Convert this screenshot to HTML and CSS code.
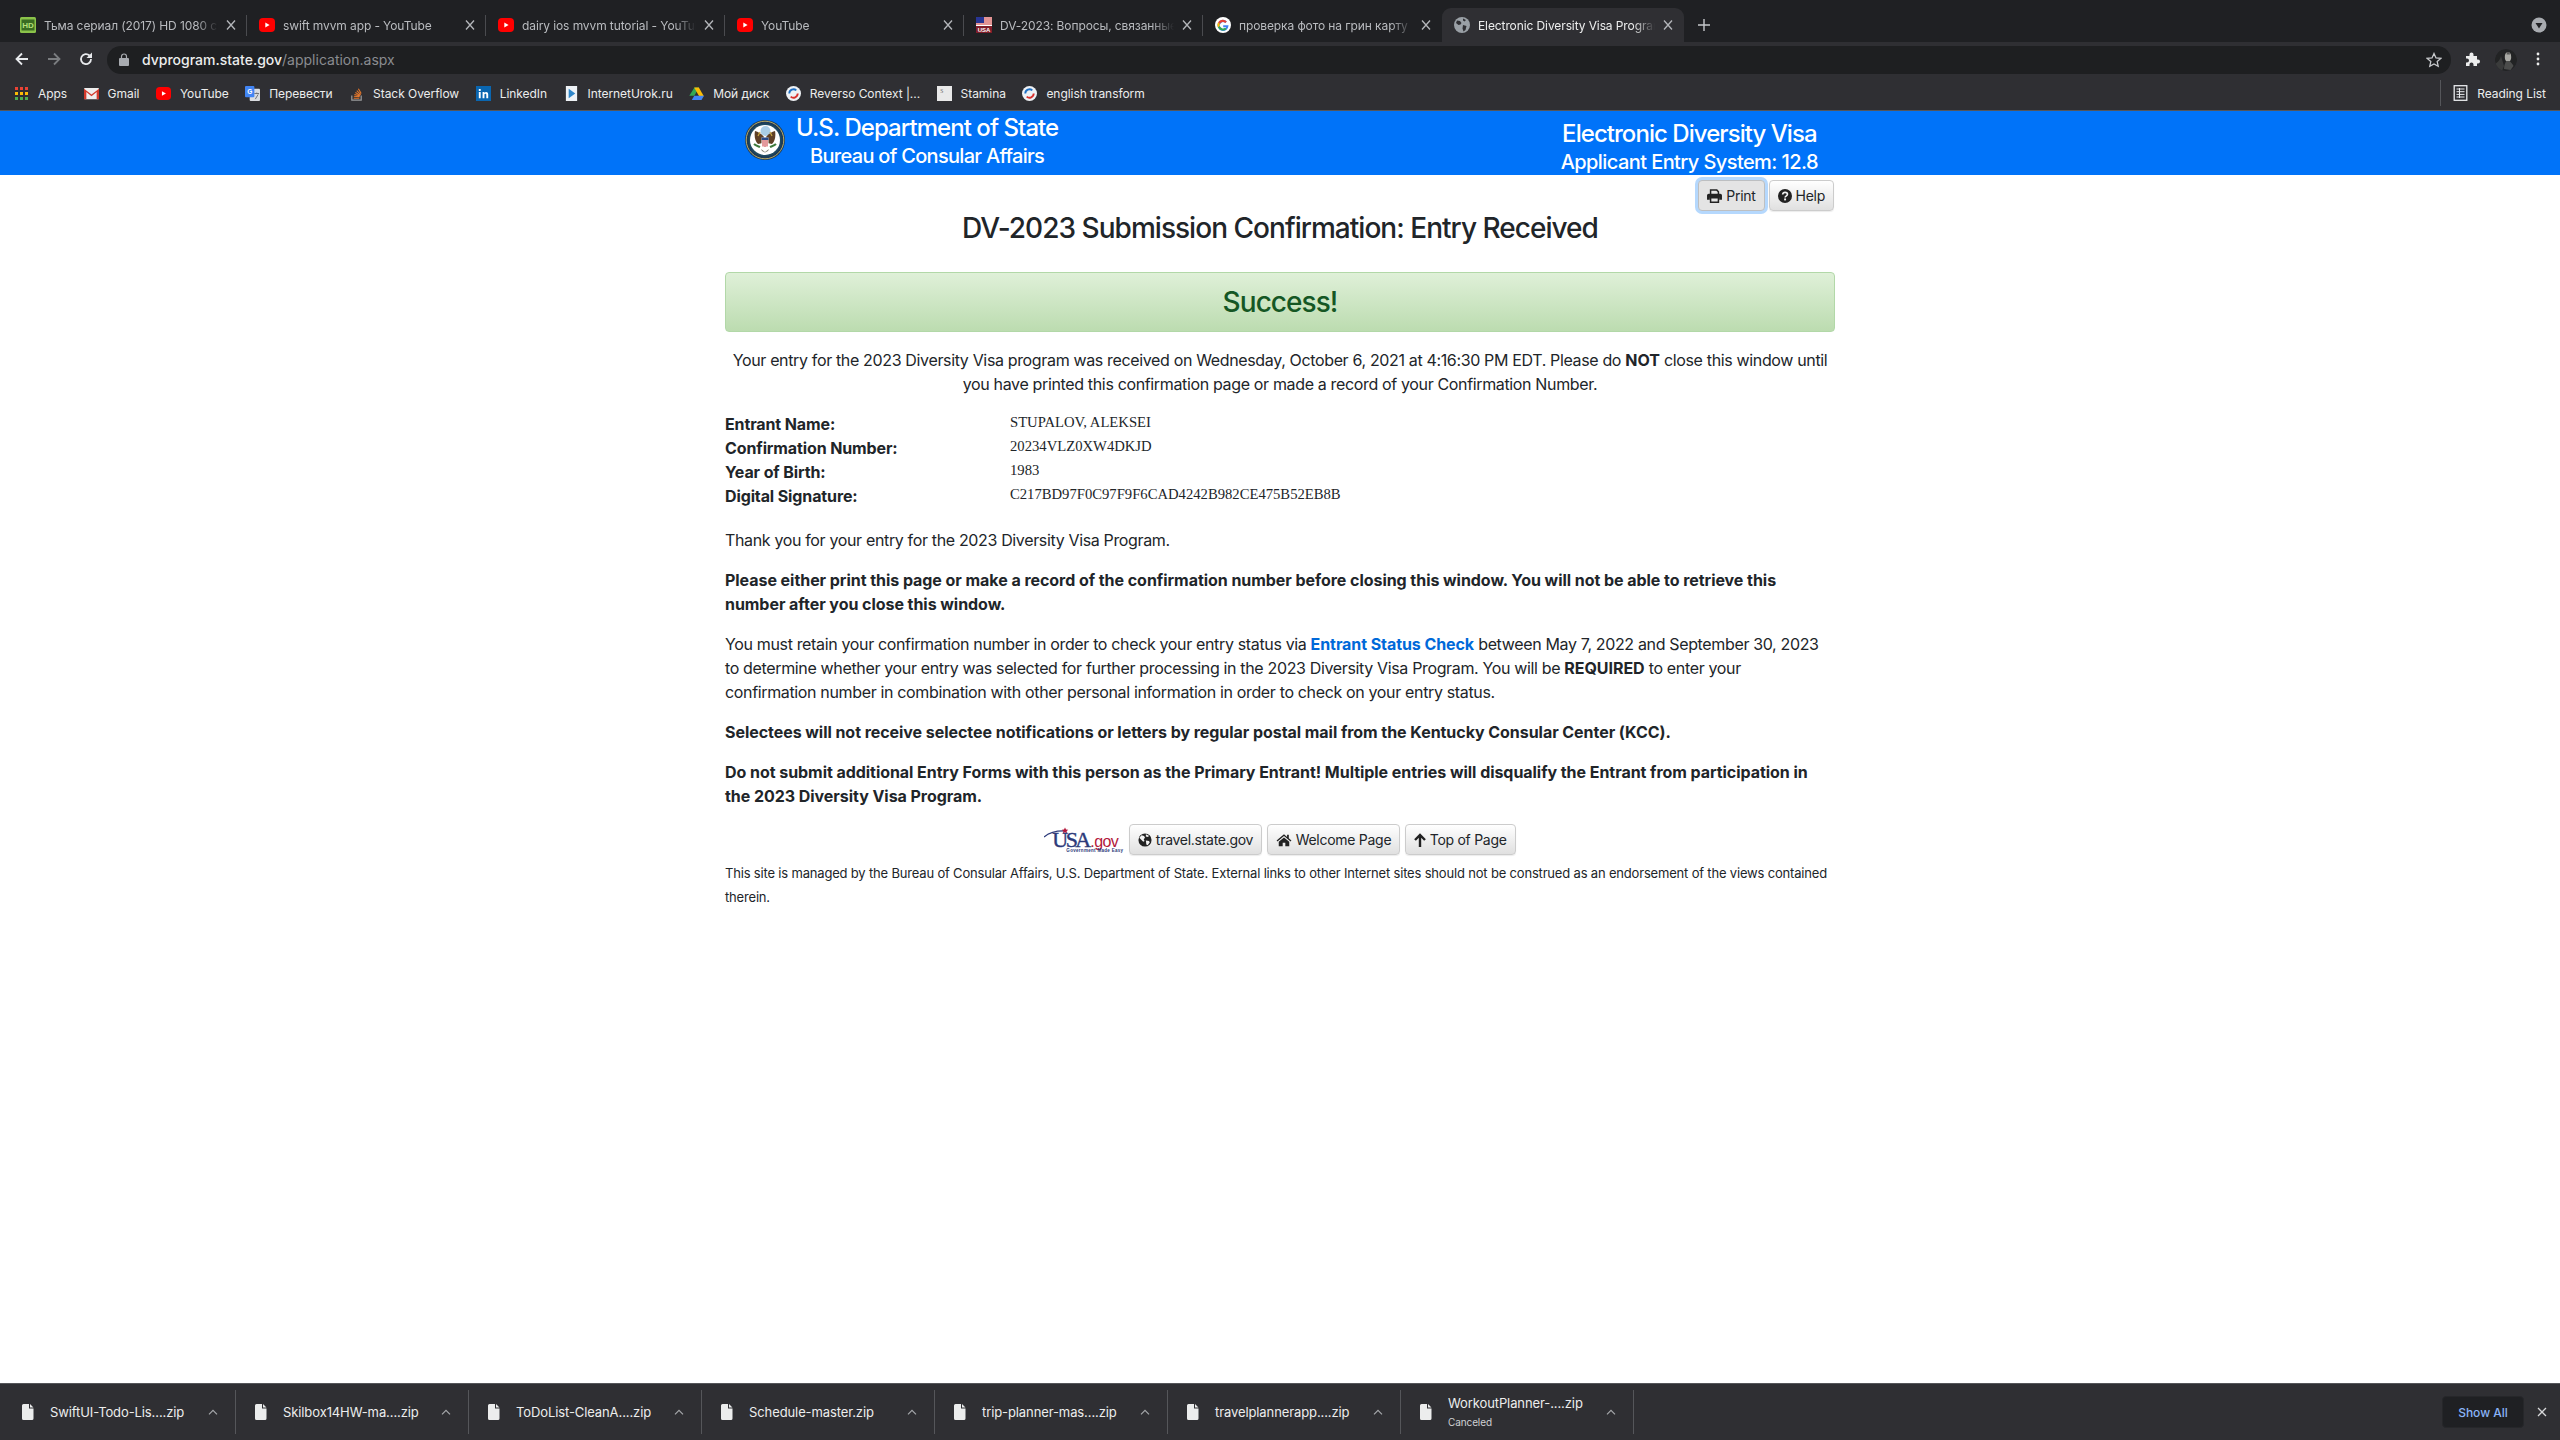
FILE: index.html
```html
<!DOCTYPE html>
<html lang="en">
<head>
<meta charset="utf-8">
<title>Electronic Diversity Visa Program</title>
<link rel="stylesheet" href="styles.css">
</head>
<body>
<svg class="defs" width="0" height="0">
  <symbol id="yt" viewBox="0 0 16 16"><rect x="0" y="1" width="16" height="14" rx="4" fill="#f00"/><path d="M6.300 5.500v5L10.600 8z" fill="#fff"/></symbol>
  <symbol id="x" viewBox="0 0 10 10"><path d="M1 .5l8 9M9 .5l-8 9" stroke="#b4b6ba" stroke-width="1.300" fill="none"/></symbol>
  <symbol id="rev" viewBox="0 0 16 16"><circle cx="8" cy="8" r="8" fill="#eef1f5"/><path d="M3.500 8a4.500 4.500 0 0 1 7.500-3.300" stroke="#1d6fc4" stroke-width="2" fill="none"/><path d="M12.500 8A4.500 4.500 0 0 1 5 11.300" stroke="#d8302c" stroke-width="2" fill="none"/></symbol>
  <symbol id="file" viewBox="0 0 12 16"><path d="M1.500 0H7v4.500h4.500V14.500a1.500 1.500 0 0 1-1.500 1.500H1.500A1.500 1.500 0 0 1 0 14.500V1.500A1.500 1.500 0 0 1 1.500 0zM8 0l3.500 3.500H8z" fill="#eceded"/></symbol>
  <symbol id="caret" viewBox="0 0 10 6"><path d="M1 5.300L5 1.300l4 4" stroke="#a5a7aa" stroke-width="1.200" fill="none"/></symbol>
</svg>

<div class="browser">
  <div class="tabstrip">
    <div class="tab"><svg class="fav" viewBox="0 0 16 16"><rect width="16" height="16" rx="1.500" fill="#8bc34a"/><rect x="1.500" y="2.500" width="13" height="11" fill="#3a6b22"/><text x="8" y="11" class="hd">HD</text></svg><span class="tab-title">Тьма сериал (2017) HD 1080 смотреть онлайн</span><svg class="tab-x"><use href="#x"/></svg></div>
    <div class="tab"><svg class="fav"><use href="#yt"/></svg><span class="tab-title">swift mvvm app - YouTube</span><svg class="tab-x"><use href="#x"/></svg></div>
    <div class="tab"><svg class="fav"><use href="#yt"/></svg><span class="tab-title">dairy ios mvvm tutorial - YouTube</span><svg class="tab-x"><use href="#x"/></svg></div>
    <div class="tab"><svg class="fav"><use href="#yt"/></svg><span class="tab-title">YouTube</span><svg class="tab-x"><use href="#x"/></svg></div>
    <div class="tab"><svg class="fav" viewBox="0 0 16 16"><rect width="16" height="16" fill="#fff"/><path d="M0 1h16M0 3h16M0 5h16M0 7h16" stroke="#c62828" stroke-width="1"/><rect width="8" height="6" fill="#283593"/><rect y="9" width="16" height="7" fill="#7f1d2a"/><text x="8" y="15.200" class="usa">USA</text></svg><span class="tab-title">DV-2023: Вопросы, связанные с</span><svg class="tab-x"><use href="#x"/></svg></div>
    <div class="tab tab-noedge"><svg class="fav" viewBox="0 0 16 16"><circle cx="8" cy="8" r="8" fill="#fff"/><path d="M13.500 8.200H8.200v2h3a3.400 3.400 0 1 1-.9-4.300l1.500-1.500A5.500 5.500 0 1 0 13.500 8.200z" fill="#4285f4"/><path d="M3.100 5.300a5.500 5.500 0 0 1 8.700-.9l-1.500 1.500a3.400 3.400 0 0 0-5.500 1z" fill="#ea4335"/><path d="M3 10.500a5.500 5.500 0 0 1 0-5.200l1.800 1.600a3.400 3.400 0 0 0 0 2.200z" fill="#fbbc05"/><path d="M3 10.500l1.800-1.400a3.400 3.400 0 0 0 5.200 1.700l1.700 1.300A5.500 5.500 0 0 1 3 10.500z" fill="#34a853"/></svg><span class="tab-title">проверка фото на грин карту</span><svg class="tab-x"><use href="#x"/></svg></div>
    <div class="tab tab-active"><svg class="fav" viewBox="0 0 16 16"><circle cx="8" cy="8" r="8" fill="#9aa0a6"/><path d="M3 3.500l3 .5 1.500 2-1 1.500-2 .5-2.500-2zM9 8l3.500 1-1 4-2 1.500-1-3zM9 1.500l3 1.500-1.500 1.500L9 3.500z" fill="#2f2f33"/></svg><span class="tab-title">Electronic Diversity Visa Program</span><svg class="tab-x"><use href="#x"/></svg></div>
    <svg class="newtab" viewBox="0 0 12 12"><path d="M6 0v12M0 6h12" stroke="#c6c8cc" stroke-width="1.400"/></svg>
    <svg class="profile" viewBox="0 0 16 16"><circle cx="8" cy="8" r="7.500" fill="#a8abb0"/><path d="M4.500 6h7L8 11.500z" fill="#202124"/></svg>
  </div>

  <div class="toolbar">
    <svg class="nav" viewBox="0 0 16 16"><path d="M14 8H3M8 2.500L2.500 8 8 13.500" stroke="#e8eaed" stroke-width="1.800" fill="none"/></svg>
    <svg class="nav" viewBox="0 0 16 16"><path d="M2 8h11M8 2.500L13.500 8 8 13.500" stroke="#7b7d80" stroke-width="1.800" fill="none"/></svg>
    <svg class="nav" viewBox="0 0 16 16"><path d="M13 8a5 5 0 1 1-1.500-3.500" stroke="#e8eaed" stroke-width="1.800" fill="none"/><path d="M14 1.500V7H8.500z" fill="#e8eaed"/></svg>
    <div class="omnibox">
      <svg class="lock" viewBox="0 0 10 13"><path d="M2.500 5V3.500a2.500 2.500 0 0 1 5 0V5" stroke="#a8abb0" stroke-width="1.200" fill="none"/><rect y="5" width="10" height="8" rx="1" fill="#a8abb0"/></svg>
      <span class="url-host">dvprogram.state.gov</span><span class="url-path">/application.aspx</span>
      <svg class="star" viewBox="0 0 16 16"><path d="M8 1.500l2 4.400 4.800.5-3.600 3.200 1 4.700L8 11.900l-4.200 2.400 1-4.700L1.200 6.400 6 5.900z" stroke="#c8cacd" stroke-width="1.300" fill="none"/></svg>
    </div>
    <svg class="ext" viewBox="0 0 16 16"><path d="M1 5h3.500V3.500a2 2 0 0 1 4 0V5H12v3.500h1a2 2 0 0 1 0 4h-1V15H8.500v-1.500a2 2 0 0 0-4 0V15H1v-3.500h1a2 2 0 0 0 0-4H1z" fill="#eceded"/></svg>
    <svg class="avatar" viewBox="0 0 22 22"><circle cx="11" cy="11" r="11" fill="#222324"/><path d="M0 15c3-2 5-4 6-8l3 10-2 5H4z" fill="#3a3b3b"/><ellipse cx="13" cy="8" rx="3.200" ry="4.800" fill="#a9a9a4"/><path d="M9 20c0-4 1.500-7 2.500-8h3c1.500 1 3 3 4 5l-3 4z" fill="#4b4c4b"/><path d="M11.500 5.500h3.500l-.5-2.500h-2.500z" fill="#5a5a58"/></svg>
    <svg class="menu" viewBox="0 0 4 16"><circle cx="2" cy="3" r="1.400" fill="#eceded"/><circle cx="2" cy="8" r="1.400" fill="#eceded"/><circle cx="2" cy="13" r="1.400" fill="#eceded"/></svg>
  </div>

  <div class="bookmarks">
    <a class="bm"><svg class="bm-i" viewBox="0 0 15 15"><path d="M1 2.500h3M6 2.500h3M11 2.500h3" stroke="#ea4335" stroke-width="3"/><path d="M1 7.500h3M6 7.500h3M11 7.500h3" stroke="#fbbc05" stroke-width="3"/><path d="M1 12.500h3M6 12.500h3M11 12.500h3" stroke="#4caf50" stroke-width="3"/></svg>Apps</a>
    <a class="bm"><svg class="bm-i" viewBox="0 0 16 16"><rect y="2" width="16" height="12" rx="1" fill="#eee"/><path d="M0 3l8 6 8-6v11h-2.500V6.500L8 11 2.500 6.500V14H0z" fill="#d33a2c"/></svg>Gmail</a>
    <a class="bm"><svg class="bm-i"><use href="#yt"/></svg>YouTube</a>
    <a class="bm"><svg class="bm-i" viewBox="0 0 16 16"><rect x="5" y="3" width="11" height="13" rx="1" fill="#d9dce0"/><rect width="10" height="12" rx="1" fill="#4285f4"/><text x="5" y="9" class="g">G</text><path d="M10 8h5M12.500 7v1.500M11 14l3-5" stroke="#6b6f75" stroke-width="1"/></svg>Перевести</a>
    <a class="bm"><svg class="bm-i" viewBox="0 0 16 16"><path d="M3 10v5h10v-5" stroke="#9b9c9d" stroke-width="1.300" fill="none"/><path d="M5 13h6M5.200 11l6 .5M5.800 9l5.800 1.500M6.800 7l5.200 3M8.300 5l4.200 4.200M10 3l3 5" stroke="#e4772c" stroke-width="1.200"/></svg>Stack Overflow</a>
    <a class="bm"><svg class="bm-i" viewBox="0 0 16 16"><rect width="16" height="16" fill="#0a66b0"/><path d="M3 6.500h2V13H3zM3 3.300h2v2H3zM7 6.500h2v1c1-1.500 4-1.500 4 1.500v4h-2V9.500c0-1.500-2-1.500-2 0V13H7z" fill="#fff"/></svg>LinkedIn</a>
    <a class="bm"><svg class="bm-i" viewBox="0 0 16 16"><path d="M2 0h12v16H2z" fill="#eef2f6"/><path d="M5 3l7 5-7 5z" fill="#2e86c9"/></svg>InternetUrok.ru</a>
    <a class="bm"><svg class="bm-i" viewBox="0 0 16 16"><path d="M5.500 1.500h5L5.300 10.500H0z" fill="#34a853" transform="translate(.3)"/><path d="M5.500 1.500h5l5.300 9.300h-5z" fill="#fbbc05"/><path d="M3 15l2.600-4.500H16L13.300 15z" fill="#4285f4"/></svg>Мой диск</a>
    <a class="bm"><svg class="bm-i"><use href="#rev"/></svg>Reverso Context |...</a>
    <a class="bm"><svg class="bm-i" viewBox="0 0 16 16"><rect width="16" height="16" fill="#e9e9e9"/><text x="5" y="7" class="s">S</text></svg>Stamina</a>
    <a class="bm"><svg class="bm-i"><use href="#rev"/></svg>english transform</a>
    <div class="reading"><svg class="bm-i rl" viewBox="0 0 14 16"><rect x=".7" y=".7" width="12.600" height="14.600" fill="none" stroke="#e8eaed" stroke-width="1.300"/><path d="M3 4h8M3 6.700h8M3 9.400h8M3 12h8M6 3v10" stroke="#e8eaed" stroke-width="1"/></svg>Reading List</div>
  </div>

  <main class="page">
    <header class="site-head">
      <div class="site-inner">
        <div class="brand">
          <svg class="seal" viewBox="0 0 40 40">
            <circle cx="20" cy="20" r="20" fill="#1d3b57"/>
            <circle cx="20" cy="20" r="18.800" fill="none" stroke="#b9a964" stroke-width="1"/>
            <circle cx="20" cy="20" r="16.500" fill="#1f4a60"/>
            <circle cx="20" cy="20" r="15" fill="#fff"/>
            <circle cx="20.500" cy="11" r="5" fill="#a9cde6"/>
            <path d="M19 17c-3-4-6-5-9-6-1 5 0 10 3 13l5-1zM21 17c3-4 6-5 9-6 1 5 0 10-3 13l-5-1z" fill="#5f4026"/>
            <path d="M13 16l2-4M27 16l-2-4" stroke="#c8a744" stroke-width="1.200"/>
            <path d="M16.500 17.500h7v6c0 2-2 3-3.500 3.500-1.500-.5-3.500-1.500-3.500-3.500z" fill="#fff"/>
            <path d="M16.500 17.500h7v2.500h-7z" fill="#2b4a8a"/>
            <path d="M18 20v6.500M20 20v7M22 20v6.500" stroke="#c8323a" stroke-width="1"/>
            <path d="M9 24c2 2 4 2 6 3M31 24c-2 2-4 2-6 3" stroke="#3e7a3c" stroke-width="2" fill="none"/>
            <path d="M16 29l4 3 4-3-1 2-3 1.500-3-1.500z" fill="#7a7a6a"/>
          </svg>
          <div class="brand-text">
            <div class="brand-1">U.S. Department of State</div>
            <div class="brand-2">Bureau of Consular Affairs</div>
          </div>
        </div>
        <div class="system">
          <div class="sys-1">Electronic Diversity Visa</div>
          <div class="sys-2">Applicant Entry System: 12.8</div>
        </div>
      </div>
    </header>

    <div class="content">
      <div class="top-actions">
        <button class="btn btn-focus"><svg class="fa fa-print" viewBox="0 0 16 15"><path d="M3.800 6V1.200h6.700l1.700 1.700V6" fill="none" stroke="#222" stroke-width="1.600"/><path d="M1.800 5h12.400A1.800 1.800 0 0 1 16 6.800v4.700h-3V9H3v2.500H0V6.800A1.800 1.800 0 0 1 1.800 5z" fill="#222"/><path d="M3.800 9.500h8.400v4.700H3.800z" fill="none" stroke="#222" stroke-width="1.600"/></svg>Print</button>
        <button class="btn"><svg class="fa" viewBox="0 0 16 16"><circle cx="8" cy="8" r="8" fill="#222"/><path d="M5.300 6.300C5.500 4.700 6.700 3.800 8.100 3.800c1.500 0 2.700 1 2.700 2.300 0 2-2.700 2-2.700 3.500" fill="none" stroke="#f2f2f2" stroke-width="1.900"/><rect x="7" y="10.800" width="2.200" height="2.200" fill="#f2f2f2"/></svg>Help</button>
      </div>
      <h1 class="title">DV-2023 Submission Confirmation: Entry Received</h1>
      <div class="success">Success!</div>
      <p class="lead">Your entry for the 2023 Diversity Visa program was received on Wednesday, October 6, 2021 at 4:16:30 PM EDT. Please do <b>NOT</b> close this window until you have printed this confirmation page or made a record of your Confirmation Number.</p>
      <dl class="facts">
        <dt>Entrant Name:</dt><dd>STUPALOV, ALEKSEI</dd>
        <dt>Confirmation Number:</dt><dd>20234VLZ0XW4DKJD</dd>
        <dt>Year of Birth:</dt><dd>1983</dd>
        <dt>Digital Signature:</dt><dd>C217BD97F0C97F9F6CAD4242B982CE475B52EB8B</dd>
      </dl>
      <p>Thank you for your entry for the 2023 Diversity Visa Program.</p>
      <p><b>Please either print this page or make a record of the confirmation number before closing this window. You will not be able to retrieve this number after you close this window.</b></p>
      <p>You must retain your confirmation number in order to check your entry status via <a class="link">Entrant Status Check</a> between May 7, 2022 and September 30, 2023 to determine whether your entry was selected for further processing in the 2023 Diversity Visa Program. You will be <b>REQUIRED</b> to enter your confirmation number in combination with other personal information in order to check on your entry status.</p>
      <p><b>Selectees will not receive selectee notifications or letters by regular postal mail from the Kentucky Consular Center (KCC).</b></p>
      <p><b>Do not submit additional Entry Forms with this person as the Primary Entrant! Multiple entries will disqualify the Entrant from participation in the 2023 Diversity Visa Program.</b></p>
      <div class="foot-actions">
        <div class="usagov"><svg class="swoosh" viewBox="0 0 26 12"><path d="M0 10C6 5 13 3.500 22 4" stroke="#2c3a7a" stroke-width="1.200" fill="none"/><path d="M21 .5l1 2 2.200.2-1.600 1.500.4 2.200-2-1.100-2 1.100.4-2.200-1.600-1.500 2.200-.2z" fill="#b3173a"/></svg><span class="usa-word">USA</span><span class="gov-word">.gov</span><span class="usa-tag">Government Made Easy</span></div>
        <button class="btn"><svg class="fa" viewBox="0 0 16 16"><circle cx="8" cy="8" r="7.500" fill="#222"/><path d="M4 2.500l3 1 1 2-1.500 1.500 1 2-1.500 1-2-2-2.500-2.500zM9 8.500l3.500.5 1 1.500-2.500 3.500-1.500-1zM9 1.500l3.500 1.500-1 1.500L9 4z" fill="#f2f2f2"/></svg>travel.state.gov</button>
        <button class="btn"><svg class="fa fa-wide" viewBox="0 0 18 16"><path d="M9 1.500L.5 8.500l1 1.200L9 3.500l7.500 6.200 1-1.200-3-2.500V2h-2v2.500z" fill="#222"/><path d="M3 10l6-5 6 5v5h-4.500v-4h-3v4H3z" fill="#222"/></svg>Welcome Page</button>
        <button class="btn"><svg class="fa fa-narrow" viewBox="0 0 12 14"><path d="M6 14V2.500M1 7l5-5 5 5" stroke="#222" stroke-width="2.400" fill="none"/></svg>Top of Page</button>
      </div>
      <p class="disclaimer">This site is managed by the Bureau of Consular Affairs, U.S. Department of State. External links to other Internet sites should not be construed as an endorsement of the views contained therein.</p>
    </div>
  </main>

  <div class="downloads">
    <div class="dl"><svg class="dl-file"><use href="#file"/></svg><span class="dl-name">SwiftUI-Todo-Lis....zip</span><svg class="dl-caret"><use href="#caret"/></svg></div>
    <div class="dl"><svg class="dl-file"><use href="#file"/></svg><span class="dl-name">Skilbox14HW-ma....zip</span><svg class="dl-caret"><use href="#caret"/></svg></div>
    <div class="dl"><svg class="dl-file"><use href="#file"/></svg><span class="dl-name">ToDoList-CleanA....zip</span><svg class="dl-caret"><use href="#caret"/></svg></div>
    <div class="dl"><svg class="dl-file"><use href="#file"/></svg><span class="dl-name">Schedule-master.zip</span><svg class="dl-caret"><use href="#caret"/></svg></div>
    <div class="dl"><svg class="dl-file"><use href="#file"/></svg><span class="dl-name">trip-planner-mas....zip</span><svg class="dl-caret"><use href="#caret"/></svg></div>
    <div class="dl"><svg class="dl-file"><use href="#file"/></svg><span class="dl-name">travelplannerapp....zip</span><svg class="dl-caret"><use href="#caret"/></svg></div>
    <div class="dl"><svg class="dl-file"><use href="#file"/></svg><span class="dl-name dl-stack">WorkoutPlanner-....zip<small>Canceled</small></span><svg class="dl-caret"><use href="#caret"/></svg></div>
    <button class="show-all">Show All</button>
    <svg class="dl-close" viewBox="0 0 10 10"><path d="M1 1l8 8M9 1l-8 8" stroke="#d6d7d9" stroke-width="1.300"/></svg>
  </div>
</div>
</body>
</html>
```

FILE: styles.css
```css
* { box-sizing: border-box; }
html, body { margin: 0; height: 100%; }
body { font-family: Inter, "Noto Sans", sans-serif; color: #212529; background: #fff; }
.defs { position: absolute; }
.browser { height: 1440px; display: flex; flex-direction: column; overflow: hidden; }

/* tab strip */
.tabstrip { height: 42px; flex: none; background: #1f2023; display: flex; align-items: stretch; padding-left: 8px; position: relative; font-size: 12px; color: #b9bbbf; letter-spacing: -.1px; }
.tab { width: 239px; flex: none; display: flex; align-items: center; padding: 0 7px 0 12px; margin-top: 8px; position: relative; }
.tab::after { content: ""; position: absolute; right: 0; top: 7px; bottom: 6px; width: 1px; background: #4a4b4f; }
.tab-noedge::after, .tab-active::after { display: none; }
.tab-active { background: #2f2f33; border-radius: 9px 9px 0 0; color: #eceded; width: 242px; }
.fav { width: 16px; height: 16px; flex: none; }
.tab-title { margin-left: 8px; flex: 1; min-width: 0; white-space: nowrap; overflow: hidden; -webkit-mask-image: linear-gradient(to left, transparent 0, #000 22px); mask-image: linear-gradient(to left, transparent 0, #000 22px); }
.tab-x { width: 10px; height: 10px; flex: none; margin: 0 4px 0 8px; }
.hd { font: 700 8px "Liberation Sans", sans-serif; fill: #b7e07a; text-anchor: middle; }
.usa { font: 700 6px "Liberation Sans", sans-serif; fill: #fff; text-anchor: middle; }
.g { font: 700 7px "Liberation Sans", sans-serif; fill: #fff; text-anchor: middle; }
.s { font: 400 6px "Liberation Serif", serif; fill: #666; text-anchor: middle; }
.newtab { width: 12px; height: 12px; margin: 19px 0 0 14px; flex: none; }
.profile { width: 16px; height: 16px; margin: 17px 13px 0 auto; flex: none; }

/* toolbar */
.toolbar { height: 32px; flex: none; background: #2f2f33; display: flex; align-items: flex-end; padding: 0 20px 0 14px; }
.nav { width: 16px; height: 16px; flex: none; margin-right: 16px; margin-bottom: 7px; }
.omnibox { height: 28px; flex: 1; min-width: 0; background: #1e1f21; border-radius: 14px; display: flex; align-items: center; padding: 0 9px 1px 12px; margin-left: -3px; font-size: 14px; font-weight: 500; color: #eceded; }
.lock { width: 10px; height: 13px; margin-right: 13px; flex: none; }
.url-path { color: #8a8c90; font-weight: 400; }
.star { width: 16px; height: 16px; margin-left: auto; flex: none; }
.ext { width: 16px; height: 16px; margin: 0 0 7px 14px; flex: none; }
.avatar { width: 22px; height: 22px; margin: 0 0 3px 14px; border-radius: 50%; flex: none; }
.menu { width: 4px; height: 16px; margin: 0 0 7px 19px; flex: none; }

/* bookmarks */
.bookmarks { height: 37px; flex: none; background: #2f2f33; border-bottom: 1px solid #55565a; display: flex; align-items: center; padding: 2px 14px 0; font-size: 12px; color: #eceded; gap: 16.500px; letter-spacing: -.05px; }
.bm { display: flex; align-items: center; gap: 9px; white-space: nowrap; }
.bm-i { width: 15px; height: 15px; flex: none; }
.reading { margin-left: auto; display: flex; align-items: center; gap: 9px; border-left: 1px solid #55565a; height: 26px; padding-left: 12px; }
.rl { height: 16px; }

/* page */
.page { flex: 1; min-height: 0; background: #fff; }
.site-head { height: 64px; background: #0073f9; color: #fff; }
.site-inner { width: 1110px; margin: 0 auto; display: flex; justify-content: space-between; height: 100%; }
.brand { display: flex; padding-left: 20px; }
.seal { width: 40px; height: 40px; margin-top: 9px; flex: none; }
.brand-text { margin-left: 11px; text-align: center; font-weight: 500; }
.brand-1 { font-size: 24px; line-height: 29px; margin-top: 2px; letter-spacing: -.95px; }
.brand-2 { font-size: 20px; line-height: 27px; letter-spacing: -.7px; padding-top: 1px; }
.system { padding-right: 17px; text-align: center; font-weight: 500; }
.sys-1 { font-size: 24px; line-height: 29px; margin-top: 8px; letter-spacing: -.95px; }
.sys-2 { font-size: 20px; line-height: 28px; letter-spacing: -.58px; }

.content { width: 1110px; margin: 0 auto; font-size: 16px; line-height: 24px; letter-spacing: -.35px; }
.content b { letter-spacing: -.05px; }
.top-actions { display: flex; justify-content: flex-end; gap: 4px; padding: 5px 1px 0 0; }
.btn { height: 31px; padding: 0 8px; display: inline-flex; align-items: center; gap: 4px; font: 400 14px/1 Inter, sans-serif; letter-spacing: -.28px; color: #212529; background: linear-gradient(#fff, #e0e0e0); border: 1px solid #ccc; border-radius: 4px; white-space: nowrap; box-shadow: 0 1px 1px rgba(0,0,0,.08); }
.btn-focus { box-shadow: 0 0 0 3px #b5d8fd; border-color: #bdbfc1; background: #e4e4e4; }
.fa { width: 14px; height: 14px; flex: none; }
.fa-wide { width: 16px; }
.fa-narrow { width: 12px; }
.fa-print { width: 15px; }
.title { margin: 0; font-size: 28px; line-height: 34px; font-weight: 500; text-align: center; letter-spacing: -.97px; }
.success { margin-top: 27px; height: 60px; display: flex; align-items: center; justify-content: center; font-size: 28px; font-weight: 500; letter-spacing: -.95px; color: #155724; background: linear-gradient(#dff0d8, #bcdcb0); border: 1px solid #b2d8a8; border-radius: 4px; }
.content p { margin: 0 0 16px; }
.content p.lead { margin: 16px 0 15px; text-align: center; }
.facts { margin: 0 0 21px; display: grid; grid-template-columns: 285px 1fr; grid-auto-rows: 24px; letter-spacing: 0; }
.facts dt { font-weight: 700; font-size: 16px; line-height: 27px; letter-spacing: -.12px; }
.facts dd { margin: 0; font: 14.670px/22px "Liberation Serif", serif; }
.link { color: #0069d9; font-weight: 700; letter-spacing: -.08px; }
.foot-actions { display: flex; justify-content: center; align-items: center; gap: 4.500px; margin-top: 16px; letter-spacing: 0; }
.usagov { width: 80px; height: 26px; position: relative; flex: none; }
.swoosh { position: absolute; left: 0; top: 0; width: 26px; height: 12px; }
.usa-word { position: absolute; left: 8px; top: 1px; font: 400 22px/24px "Liberation Serif", serif; color: #2c3a7a; letter-spacing: -2.600px; -webkit-text-stroke: .4px #2c3a7a; }
.gov-word { position: absolute; left: 46px; top: 3px; font: 400 16px/24px "Liberation Sans", sans-serif; color: #b3173a; letter-spacing: -.6px; }
.usa-tag { position: absolute; left: 22px; top: 21px; font: 700 4.500px/6px "Liberation Sans", sans-serif; color: #2c3a7a; white-space: nowrap; letter-spacing: .3px; }
.content p.disclaimer { margin: 6px 0 0; font-size: 13px; letter-spacing: -.18px; }

/* downloads */
.downloads { height: 57px; flex: none; background: #2f2f33; border-top: 1px solid #55565a; display: flex; align-items: center; padding-left: 3px; color: #eceded; font-size: 13px; letter-spacing: -.1px; }
.dl { width: 233px; height: 44px; flex: none; display: flex; align-items: center; padding-left: 19px; border-right: 1px solid #55565a; }
.dl-file { width: 12px; height: 16px; flex: none; }
.dl-name { margin-left: 16px; flex: 1; white-space: nowrap; }
.dl-stack { line-height: 16px; }
.dl-stack small { display: block; font-size: 10px; margin-top: 3px; color: #d0d1d3; }
.dl-caret { width: 10px; height: 6px; flex: none; margin-right: 17px; }
.show-all { margin-left: auto; width: 82px; height: 32px; background: #1f2023; border: 1px solid #26272a; border-radius: 4px; color: #8ab4f8; font: 500 12px Inter, sans-serif; }
.dl-close { width: 10px; height: 10px; margin: 0 13px 0 13px; flex: none; }
```
